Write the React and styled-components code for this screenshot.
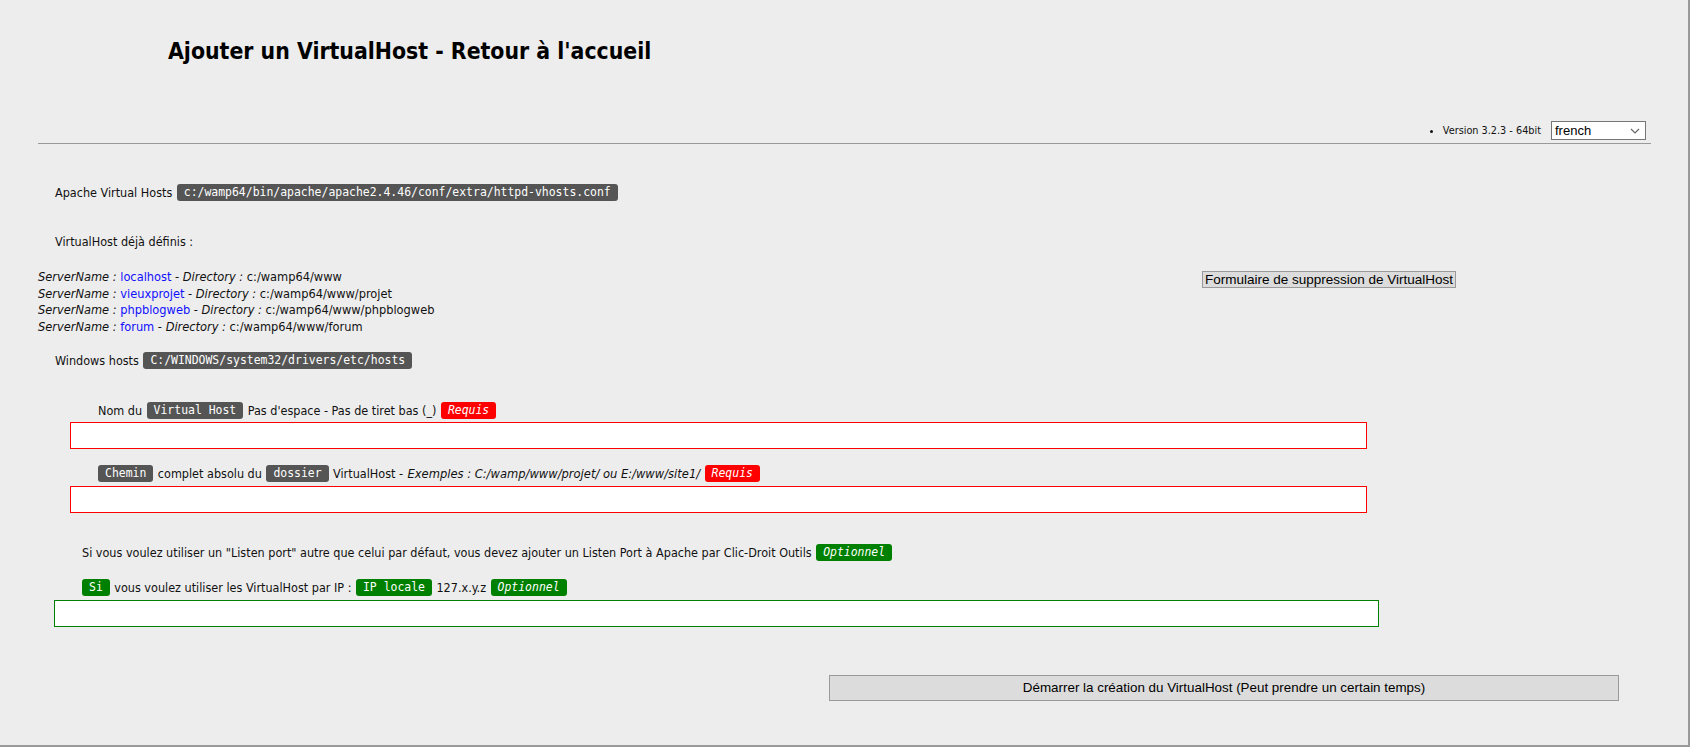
import React from "react";
import styled, { createGlobalStyle } from "styled-components";

const Global = createGlobalStyle`
  html, body { margin: 0; padding: 0; background: #ededed; }
  body { font-family: "DejaVu Sans Condensed", "DejaVu Sans", sans-serif; font-size: 12.5px; color: #111; }
`;

const Page = styled.div`
  box-sizing: border-box;
  width: 1690px;
  min-height: 747px;
  padding: 38px 37px 0 38px;
  border-right: 2px solid #999;
  border-bottom: 2px solid #999;
`;

const Title = styled.h1`
  margin: 0 0 0 130px;
  height: 26px;
  font-family: "DejaVu Sans Condensed", "DejaVu Sans", sans-serif;
  font-stretch: condensed;
  font-size: 22.8px;
  line-height: 26px;
  font-weight: bold;
  color: #000;
`;

const TopBar = styled.div`
  display: flex;
  justify-content: flex-end;
  align-items: center;
  margin-top: 57px;
  padding-right: 5px;
  height: 19px;
`;

const VersionList = styled.ul`
  margin: 0 10px 0 0;
  padding: 0;
  list-style: disc;
  font-size: 10.8px;
  li { margin-left: 10px; }
`;

const LangSelect = styled.div`
  box-sizing: border-box;
  width: 95px;
  height: 19px;
  border: 1px solid #767676;
  background: #fff;
  display: flex;
  align-items: center;
  justify-content: space-between;
  padding: 0 5px 0 3px;
  font-family: "Liberation Sans", Arial, sans-serif;
  font-size: 13px;
  color: #000;
`;

const Rule = styled.hr`
  margin: 3px 0 0 0;
  border: 0;
  border-top: 1px solid #999;
  height: 0;
`;

const Line = styled.div`
  display: flex;
  align-items: center;
  gap: 4.5px;
  margin-left: ${(p) => p.$indent || 0}px;
  margin-top: ${(p) => p.$top || 0}px;
  height: 18px;
  white-space: nowrap;
`;

const Pill = styled.span`
  display: inline-block;
  height: 17px;
  line-height: 17px;
  padding: 0 7px;
  border-radius: 3px;
  background: ${(p) => (p.$tone === "red" ? "#ff0000" : p.$tone === "green" ? "#008000" : "#555")};
  color: #fff;
  font-family: "DejaVu Sans Mono", "Liberation Mono", monospace;
  font-size: 11.45px;
  font-style: ${(p) => (p.$italic ? "italic" : "normal")};
`;

const HostsRow = styled.div`
  display: flex;
  align-items: flex-start;
  margin-top: 19px;
`;

const HostList = styled.div`
  flex: 0 0 1164px;
  font-size: 12.7px;
  line-height: 16.7px;
`;

const Em = styled.i``;

const Example = styled.i`
  font-size: 12.8px;
`;

const HostLink = styled.a`
  color: #1010ff;
  text-decoration: none;
`;

const GrayButton = styled.button`
  box-sizing: border-box;
  font-family: "Liberation Sans", Arial, sans-serif;
  font-size: ${(p) => p.$fs || 13.5}px;
  color: #000;
  background: #dcdcdc;
  border: 1px solid #999;
  padding: 0 2px;
  height: ${(p) => p.$h || 17}px;
  width: ${(p) => (p.$w ? p.$w + "px" : "auto")};
  margin-top: ${(p) => p.$top || 2}px;
  margin-left: ${(p) => p.$left || 0}px;
  line-height: 1;
`;

const Field = styled.input`
  display: block;
  box-sizing: border-box;
  margin: ${(p) => p.$top || 0}px 0 0 ${(p) => p.$left}px;
  width: ${(p) => p.$w}px;
  height: 27px;
  background: #fff;
  border: 1px solid ${(p) => (p.$ok ? "#008000" : "#ff0000")};
  outline: none;
`;

const hosts = [
  ["localhost", "c:/wamp64/www"],
  ["vieuxprojet", "c:/wamp64/www/projet"],
  ["phpblogweb", "c:/wamp64/www/phpblogweb"],
  ["forum", "c:/wamp64/www/forum"],
];

export default function App() {
  return (
    <>
      <Global />
      <Page>
        <Title>Ajouter un VirtualHost - Retour à l'accueil</Title>
        <TopBar>
          <VersionList>
            <li>Version 3.2.3 - 64bit</li>
          </VersionList>
          <LangSelect>
            <span>french</span>
            <svg width="10" height="6" viewBox="0 0 10 6">
              <path d="M1 1 L5 5 L9 1" fill="none" stroke="#666" strokeWidth="1.2" />
            </svg>
          </LangSelect>
        </TopBar>
        <Rule />

        <Line $indent={17} $top={39}>
          Apache Virtual Hosts
          <Pill>c:/wamp64/bin/apache/apache2.4.46/conf/extra/httpd-vhosts.conf</Pill>
        </Line>

        <Line $indent={17} $top={31}>VirtualHost déjà définis :</Line>

        <HostsRow>
          <HostList>
            {hosts.map(([n, d]) => (
              <div key={n}>
                <Em>ServerName : </Em>
                <HostLink href="#">{n}</HostLink> - <Em>Directory : </Em>
                {d}
              </div>
            ))}
          </HostList>
          <GrayButton>Formulaire de suppression de VirtualHost</GrayButton>
        </HostsRow>

        <Line $indent={17} $top={16}>
          Windows hosts
          <Pill>C:/WINDOWS/system32/drivers/etc/hosts</Pill>
        </Line>

        <Line $indent={60} $top={32}>
          Nom du <Pill>Virtual Host</Pill> Pas d'espace - Pas de tiret bas (_) <Pill $tone="red" $italic>Requis</Pill>
        </Line>
        <Field $left={32} $w={1297} $top={2} />

        <Line $indent={60} $top={16}>
          <Pill>Chemin</Pill> complet absolu du <Pill>dossier</Pill> VirtualHost - <Example>Exemples : C:/wamp/www/projet/ ou E:/www/site1/</Example>
          <Pill $tone="red" $italic>Requis</Pill>
        </Line>
        <Field $left={32} $w={1297} $top={3} />

        <Line $indent={44} $top={31}>
          Si vous voulez utiliser un "Listen port" autre que celui par défaut, vous devez ajouter un Listen Port à Apache par Clic-Droit Outils
          <Pill $tone="green" $italic>Optionnel</Pill>
        </Line>

        <Line $indent={44} $top={17}>
          <Pill $tone="green">Si</Pill> vous voulez utiliser les VirtualHost par IP : <Pill $tone="green">IP locale</Pill> 127.x.y.z
          <Pill $tone="green" $italic>Optionnel</Pill>
        </Line>
        <Field $left={16} $w={1325} $top={3} $ok />

        <GrayButton $left={791} $w={790} $h={26} $top={48} $fs={13.4}>
          Démarrer la création du VirtualHost (Peut prendre un certain temps)
        </GrayButton>
      </Page>
    </>
  );
}
